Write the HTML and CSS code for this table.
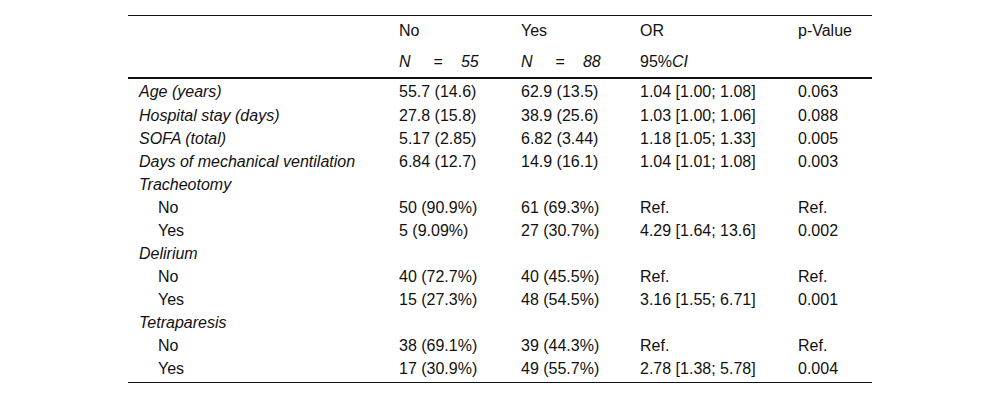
FILE: index.html
```html
<!DOCTYPE html>
<html>
<head>
<meta charset="utf-8">
<link rel="stylesheet" href="styles.css">
</head>
<body>
<table class="tbl">
  <colgroup>
    <col class="c1"><col class="c2"><col class="c3"><col class="c4"><col class="c5">
  </colgroup>
  <thead>
    <tr class="h1">
      <th></th><th>No</th><th>Yes</th><th>OR</th><th>p-Value</th>
    </tr>
    <tr class="h2">
      <th></th>
      <th><i>N</i><span class="eq">=</span><i>55</i></th>
      <th><i>N</i><span class="eq">=</span><i>88</i></th>
      <th>95%<i>CI</i></th>
      <th></th>
    </tr>
  </thead>
  <tbody>
    <tr><td class="lab"><i>Age (years)</i></td><td>55.7 (14.6)</td><td>62.9 (13.5)</td><td>1.04 [1.00; 1.08]</td><td>0.063</td></tr>
    <tr><td class="lab"><i>Hospital stay (days)</i></td><td>27.8 (15.8)</td><td>38.9 (25.6)</td><td>1.03 [1.00; 1.06]</td><td>0.088</td></tr>
    <tr><td class="lab"><i>SOFA (total)</i></td><td>5.17 (2.85)</td><td>6.82 (3.44)</td><td>1.18 [1.05; 1.33]</td><td>0.005</td></tr>
    <tr><td class="lab"><i>Days of mechanical ventilation</i></td><td>6.84 (12.7)</td><td>14.9 (16.1)</td><td>1.04 [1.01; 1.08]</td><td>0.003</td></tr>
    <tr><td class="lab"><i>Tracheotomy</i></td><td></td><td></td><td></td><td></td></tr>
    <tr><td class="sub">No</td><td>50 (90.9%)</td><td>61 (69.3%)</td><td>Ref.</td><td>Ref.</td></tr>
    <tr><td class="sub">Yes</td><td>5 (9.09%)</td><td>27 (30.7%)</td><td>4.29 [1.64; 13.6]</td><td>0.002</td></tr>
    <tr><td class="lab"><i>Delirium</i></td><td></td><td></td><td></td><td></td></tr>
    <tr><td class="sub">No</td><td>40 (72.7%)</td><td>40 (45.5%)</td><td>Ref.</td><td>Ref.</td></tr>
    <tr><td class="sub">Yes</td><td>15 (27.3%)</td><td>48 (54.5%)</td><td>3.16 [1.55; 6.71]</td><td>0.001</td></tr>
    <tr><td class="lab"><i>Tetraparesis</i></td><td></td><td></td><td></td><td></td></tr>
    <tr><td class="sub">No</td><td>38 (69.1%)</td><td>39 (44.3%)</td><td>Ref.</td><td>Ref.</td></tr>
    <tr class="last"><td class="sub">Yes</td><td>17 (30.9%)</td><td>49 (55.7%)</td><td>2.78 [1.38; 5.78]</td><td>0.004</td></tr>
  </tbody>
</table>
</body>
</html>
```

FILE: styles.css
```css
html, body {
  margin: 0;
  padding: 0;
  background: #fff;
}
body {
  padding: 15px 0 0 0;
  font-family: "Liberation Sans", Arial, sans-serif;
  font-size: 16px;
  line-height: 18px;
  color: #111;
}
.tbl {
  width: 744px;
  margin: 0 auto;
  border-collapse: collapse;
  table-layout: fixed;
  border-top: 1px solid #111;
  border-bottom: 1px solid #111;
}
.c1 { width: 260px; }
.c2 { width: 122px; }
.c3 { width: 119px; }
.c4 { width: 158px; }
.c5 { width: 85px; }
th, td {
  padding: 0 0 0 11px;
  text-align: left;
  font-weight: normal;
  white-space: nowrap;
  vertical-align: middle;
}
.h1 th { height: 30px; }
.h2 th { height: 31px; border-bottom: 2px solid #111; }
.eq { display: inline-block; margin: 0 18px 0 23px; }
tbody td { height: 23px; }
tbody tr:first-child td { height: 24px; padding-top: 1px; }
.last td { padding-bottom: 2px; }
.sub { padding-left: 30px; }
```
